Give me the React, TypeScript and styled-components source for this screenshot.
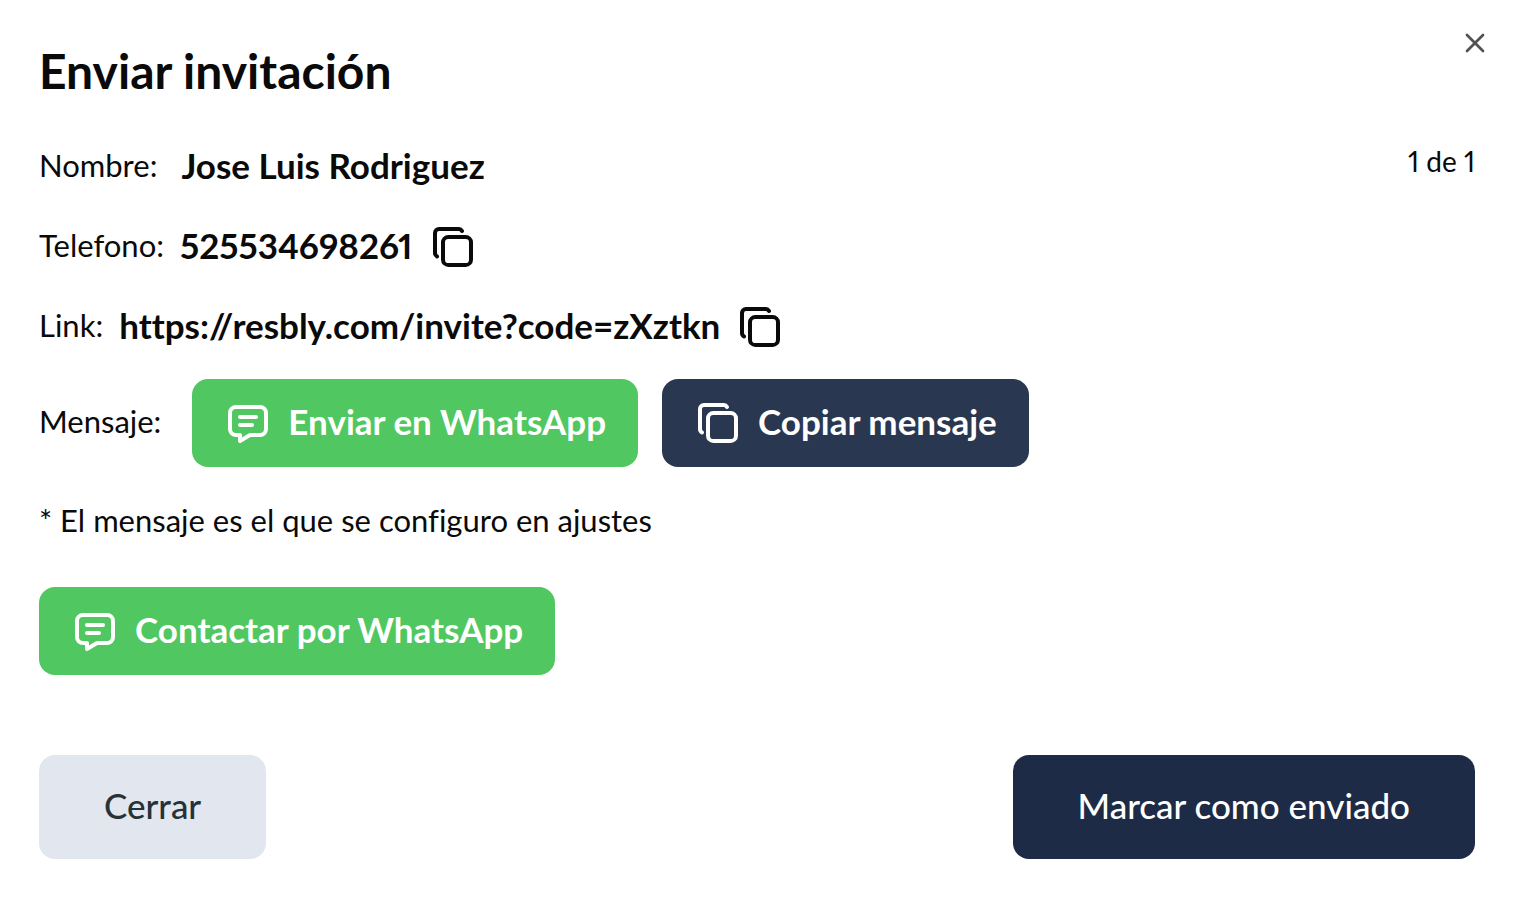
import React from 'react';
import styled, { createGlobalStyle } from 'styled-components';

const GlobalStyle = createGlobalStyle`
  *, *::before, *::after { box-sizing: border-box; }
  body {
    margin: 0;
    background: #ffffff;
    color: #0a0a0a;
    font-family: Lato, "Noto Sans", sans-serif;
    font-variant-numeric: proportional-nums;
    font-variant-ligatures: none;
  }
  button { font-family: inherit; cursor: pointer; }
`;

const Dialog = styled.main`
  position: relative;
  min-height: 100vh;
  padding: 31px 41px 41px 39px;
  display: flex;
  flex-direction: column;
  background: #ffffff;
`;

const CloseButton = styled.button`
  position: absolute;
  top: 27px;
  right: 25px;
  width: 32px;
  height: 32px;
  padding: 0;
  border: 0;
  background: transparent;
  color: #0a0a0a;
  opacity: 0.7;
  svg { display: block; }
`;

const Title = styled.h1`
  margin: 0 0 16px;
  font-size: 48px;
  line-height: 80px;
  font-weight: 700;
`;

const Details = styled.section`
  display: flex;
  justify-content: space-between;
  align-items: flex-start;
`;

const Fields = styled.dl`
  margin: 0;
`;

const Field = styled.div<{ $gap?: number }>`
  display: flex;
  align-items: center;
  gap: ${({ $gap = 16 }) => $gap}px;
  height: 80px;
`;

const Label = styled.dt`
  padding-bottom: 4px;
  font-size: 31px;
  line-height: 48px;
  font-weight: 400;
`;

const Value = styled.dd`
  margin: 0;
  display: flex;
  align-items: center;
  gap: 16px;
  font-size: 35px;
  line-height: 48px;
  font-weight: 700;
`;

const Text = styled.span`
  padding-bottom: 4px;
`;

const Counter = styled.span`
  padding-top: 10px;
  font-size: 28px;
  line-height: 48px;
`;

const IconButton = styled.button`
  width: 48px;
  height: 48px;
  padding: 0;
  border: 0;
  background: transparent;
  color: inherit;
  svg { display: block; }
`;

const MessageRow = styled.div`
  display: flex;
  align-items: center;
  gap: 24px;
  margin-top: 12px;
`;

const MessageLabel = styled.span`
  margin-right: 7px;
  padding-bottom: 4px;
  font-size: 31px;
  line-height: 48px;
`;

const ActionButton = styled.button<{ $tone: 'green' | 'navy' }>`
  display: inline-flex;
  align-items: center;
  gap: 16px;
  height: 88px;
  padding: 0 32px;
  border: 0;
  border-radius: 16px;
  background: ${({ $tone }) => ($tone === 'green' ? '#50c760' : '#293751')};
  color: #ffffff;
  font-size: 35px;
  line-height: 48px;
  font-weight: 700;
  white-space: nowrap;
`;

const Note = styled.p`
  margin: 29px 0 43px;
  font-size: 31px;
  line-height: 48px;
`;

const Footer = styled.footer`
  display: flex;
  justify-content: space-between;
  margin-top: 80px;
`;

const FooterButton = styled.button<{ $primary?: boolean }>`
  height: 104px;
  padding: 0 65px 4px;
  border: 0;
  border-radius: 16px;
  background: ${({ $primary }) => ($primary ? '#1d2b47' : '#e2e6ef')};
  color: ${({ $primary }) => ($primary ? '#ffffff' : '#263238')};
  font-size: 35px;
  line-height: 48px;
  font-weight: 500;
`;

const strokeProps = {
  viewBox: '0 0 24 24',
  fill: 'none',
  stroke: 'currentColor',
  strokeWidth: 2,
  strokeLinecap: 'round' as const,
  strokeLinejoin: 'round' as const,
  'aria-hidden': true,
};

const CopyIcon = () => (
  <svg width="48" height="48" {...strokeProps}>
    <path d="M7 9.667a2.667 2.667 0 0 1 2.667 -2.667h8.666a2.667 2.667 0 0 1 2.667 2.667v8.666a2.667 2.667 0 0 1 -2.667 2.667h-8.666a2.667 2.667 0 0 1 -2.667 -2.667z" />
    <path d="M4.012 16.737a2.005 2.005 0 0 1 -1.012 -1.737v-10c0 -1.1 .9 -2 2 -2h10c.75 0 1.158 .385 1.5 1" />
  </svg>
);

const MessageIcon = () => (
  <svg width="48" height="48" {...strokeProps}>
    <path d="M8 9h8" />
    <path d="M8 13h6" />
    <path d="M18 4a3 3 0 0 1 3 3v8a3 3 0 0 1 -3 3h-5l-5 3v-3h-2a3 3 0 0 1 -3 -3v-8a3 3 0 0 1 3 -3h12z" />
  </svg>
);

const CloseIcon = () => (
  <svg width="32" height="32" {...strokeProps}>
    <path d="M18 6 6 18" />
    <path d="m6 6 12 12" />
  </svg>
);

export default function App() {
  return (
    <>
      <GlobalStyle />
      <Dialog>
        <Title>Enviar invitación</Title>
        <Details>
          <Fields>
            <Field $gap={24}>
              <Label>Nombre:</Label>
              <Value>
                <Text>Jose Luis Rodriguez</Text>
              </Value>
            </Field>
            <Field>
              <Label>Telefono:</Label>
              <Value>
                <Text>525534698261</Text>
                <IconButton type="button" aria-label="Copiar telefono"><CopyIcon /></IconButton>
              </Value>
            </Field>
            <Field>
              <Label>Link:</Label>
              <Value>
                <Text>https://resbly.com/invite?code=zXztkn</Text>
                <IconButton type="button" aria-label="Copiar link"><CopyIcon /></IconButton>
              </Value>
            </Field>
          </Fields>
          <Counter>1 de 1</Counter>
        </Details>
        <MessageRow>
          <MessageLabel>Mensaje:</MessageLabel>
          <ActionButton type="button" $tone="green">
            <MessageIcon />
            <Text>Enviar en WhatsApp</Text>
          </ActionButton>
          <ActionButton type="button" $tone="navy">
            <CopyIcon />
            <Text>Copiar mensaje</Text>
          </ActionButton>
        </MessageRow>
        <Note>* El mensaje es el que se configuro en ajustes</Note>
        <div>
          <ActionButton type="button" $tone="green">
            <MessageIcon />
            <Text>Contactar por WhatsApp</Text>
          </ActionButton>
        </div>
        <Footer>
          <FooterButton type="button">Cerrar</FooterButton>
          <FooterButton type="button" $primary>Marcar como enviado</FooterButton>
        </Footer>
        <CloseButton type="button" aria-label="Cerrar"><CloseIcon /></CloseButton>
      </Dialog>
    </>
  );
}
